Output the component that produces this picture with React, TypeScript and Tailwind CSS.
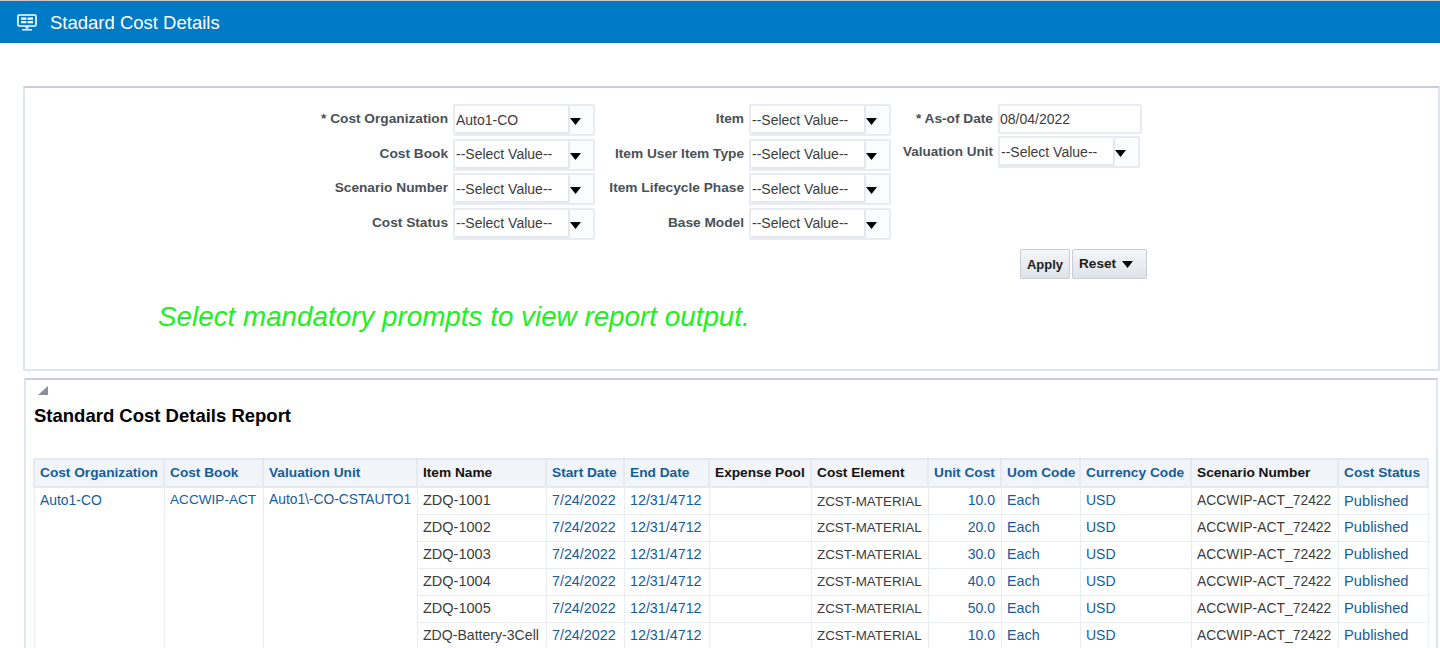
import React from "react";

const Arrow = ({ className = "" }: { className?: string }) => (
  <svg width="11" height="7" viewBox="0 0 11 7" className={className}>
    <path d="M0 0H11L5.5 7Z" fill="#000" />
  </svg>
);

const Select = ({ value = "--Select Value--" }: { value?: string }) => (
  <div className="flex h-[32px] w-[142px] rounded-[2px] border-2 border-[#e8ecf2] bg-[#fbfcfd]">
    <div className="flex w-[115px] items-center rounded-[2px] border-r-2 border-b-2 border-[#e3e7ee] bg-white pl-[1px] pt-[2px] text-[14px] text-[#3c3c3c]">
      {value}
    </div>
    <div className="flex flex-1 items-center pt-[3px]">
      <Arrow />
    </div>
  </div>
);

const Field = ({ label, value, labelW }: { label: string; value?: string; labelW: string }) => (
  <div className="flex h-[34.5px] items-start">
    <div className={`${labelW} pr-[5px] pt-[5px] text-right text-[13.7px] font-bold whitespace-nowrap text-[#4a5058]`}>{label}</div>
    <Select value={value} />
  </div>
);

const headers: [string, boolean][] = [
  ["Cost Organization", true],
  ["Cost Book", true],
  ["Valuation Unit", true],
  ["Item Name", false],
  ["Start Date", true],
  ["End Date", true],
  ["Expense Pool", false],
  ["Cost Element", false],
  ["Unit Cost", true],
  ["Uom Code", true],
  ["Currency Code", true],
  ["Scenario Number", false],
  ["Cost Status", true],
];

const widths = [130, 99, 154, 129, 78, 85, 102, 117, 73, 79, 111, 147, 90];

const rows: [string, string, string][] = [
  ["ZDQ-1001", "10.0", "text-[14.5px]"],
  ["ZDQ-1002", "20.0", "text-[14.5px]"],
  ["ZDQ-1003", "30.0", "text-[14.5px]"],
  ["ZDQ-1004", "40.0", "text-[14.5px]"],
  ["ZDQ-1005", "50.0", "text-[14.5px]"],
  ["ZDQ-Battery-3Cell", "10.0", "text-[14.1px]"],
];

const td = "h-[27px] border border-[#e9edf2] px-[5.5px] align-middle whitespace-nowrap";
const link = "text-[#145c9e]";
const plain = "text-[#3c3c3c]";

export default function App() {
  return (
    <div className="h-[648px] overflow-hidden bg-white font-['Liberation_Sans',Arial,sans-serif]">
      <div className="h-[1px] bg-[#c9c9c9]" />
      <header className="flex h-[42px] items-center bg-[#007ac5] pl-[17px] pt-[2px] text-white">
        <svg width="20" height="17" viewBox="0 0 20 17" fill="none" className="mb-[2px]">
          <rect x="1" y="1" width="18" height="11" rx="1" stroke="#fff" strokeWidth="1.6" />
          <path d="M4 3.5h5.4v2.2H4zM10.6 3.5H16v2.2h-5.4zM4 7h5.4v2.2H4zM10.6 7H16v2.2h-5.4z" fill="#fff" />
          <path d="M8.5 12.5h3V14.5h-3zM5 15h10v1.4H5z" fill="#fff" />
        </svg>
        <h1 className="ml-[13px] text-[18.5px] font-normal">Stadard Cost Details</h1>
      </header>

      <section className="mt-[43px] ml-[23px] h-[285px] w-[1417px] border-2 border-t-[#c5cede] border-r-[#dfe4ed] border-b-[#dfe4ed] border-l-[#dfe4ed] pt-[16px]">
        <div className="flex items-start">
          <div>
            <Field labelW="w-[428px]" label="* Cost Organization" value="Auto1-CO" />
            <Field labelW="w-[428px]" label="Cost Book" />
            <Field labelW="w-[428px]" label="Scenario Number" />
            <Field labelW="w-[428px]" label="Cost Status" />
          </div>
          <div>
            <Field labelW="w-[154px]" label="Item" />
            <Field labelW="w-[154px]" label="Item User Item Type" />
            <Field labelW="w-[154px]" label="Item Lifecycle Phase" />
            <Field labelW="w-[154px]" label="Base Model" />
          </div>
          <div>
            <div className="flex h-[32px] items-start">
              <div className="w-[107px] pr-[5px] pt-[5px] text-right text-[13.7px] font-bold whitespace-nowrap text-[#4a5058]">* As-of Date</div>
              <div className="flex h-[30px] w-[144px] items-center rounded-[2px] border-2 border-[#e8ecf2] pl-[0px] text-[14px] text-[#3c3c3c]">08/04/2022</div>
            </div>
            <div className="flex items-start">
              <div className="w-[107px] pr-[5px] pt-[6px] text-right text-[13.5px] font-bold whitespace-nowrap text-[#4a5058]">Valuation Unit</div>
              <Select />
            </div>
          </div>
        </div>
        <div className="mt-[7px] flex gap-[2px] pl-[995px]">
          <button className="h-[30px] w-[50px] rounded-[2px] border border-[#c9ced6] bg-gradient-to-b from-[#f4f6f8] to-[#dfe3e8] pt-[1px] text-[13px] font-bold text-[#1c1c1c]">Apply</button>
          <button className="flex h-[30px] w-[75px] items-center gap-[6px] rounded-[2px] border border-[#c9ced6] bg-gradient-to-b from-[#f4f6f8] to-[#dfe3e8] pl-[6px] text-[13.6px] font-bold text-[#1c1c1c]">
            Reset
            <Arrow />
          </button>
        </div>
        <p className="mt-[22px] pl-[133px] text-[27.8px] leading-[32px] italic text-[#20f020]">Select mandatory prompts to view report output.</p>
      </section>

      <section className="mt-[7px] ml-[24px] h-[300px] w-[1414px] border-2 border-t-[#c5cede] border-r-[#dfe4ed] border-b-0 border-l-[#dfe4ed] pl-[7px]">
        <svg width="10" height="9" viewBox="0 0 10 9" className="mt-[6px] ml-[5px]">
          <path d="M10 0V9H0Z" fill="#8a8f96" />
        </svg>
        <h2 className="mt-[9px] pl-[1px] text-[18.5px] leading-[24px] font-bold text-black">Standard Cost Details Report</h2>
        <table className="mt-[30px] table-fixed border-collapse text-[13.9px]" style={{ width: 1394 }}>
          <colgroup>
            {widths.map((w, i) => (
              <col key={i} style={{ width: w }} />
            ))}
          </colgroup>
          <thead>
            <tr>
              {headers.map(([h, isLink]) => (
                <th
                  key={h}
                  className={`h-[28px] border-2 border-[#e6eaf0] bg-[#f1f4f8] px-[5px] pt-[1px] text-left text-[13.7px] font-bold whitespace-nowrap ${isLink ? link : "text-[#111]"}`}
                >
                  {h}
                </th>
              ))}
            </tr>
          </thead>
          <tbody>
            {rows.map(([name, cost, nameSize], i) => (
              <tr key={name}>
                {i === 0 && (
                  <>
                    <td rowSpan={6} className={`${td} ${link} pt-[2px] align-top`}>Auto1-CO</td>
                    <td rowSpan={6} className={`${td} ${link} pt-[2px] align-top text-[13.6px]`}>ACCWIP-ACT</td>
                    <td rowSpan={6} className={`${td} ${link} pt-[2px] align-top text-[13.8px]`}>Auto1\-CO-CSTAUTO1</td>
                  </>
                )}
                <td className={`${td} ${plain} ${nameSize}`}>{name}</td>
                <td className={`${td} ${link} text-[14.3px]`}>7/24/2022</td>
                <td className={`${td} ${link} text-[14.3px]`}>12/31/4712</td>
                <td className={td}></td>
                <td className={`${td} ${plain} pt-[2px] text-[13.4px]`}>ZCST-MATERIAL</td>
                <td className={`${td} ${link} text-right text-[14px]`}>{cost}</td>
                <td className={`${td} ${link} text-[14.3px]`}>Each</td>
                <td className={`${td} ${link} text-[14px]`}>USD</td>
                <td className={`${td} ${plain}`}>ACCWIP-ACT_72422</td>
                <td className={`${td} ${link} text-[14.7px]`}>Published</td>
              </tr>
            ))}
          </tbody>
        </table>
      </section>
    </div>
  );
}
